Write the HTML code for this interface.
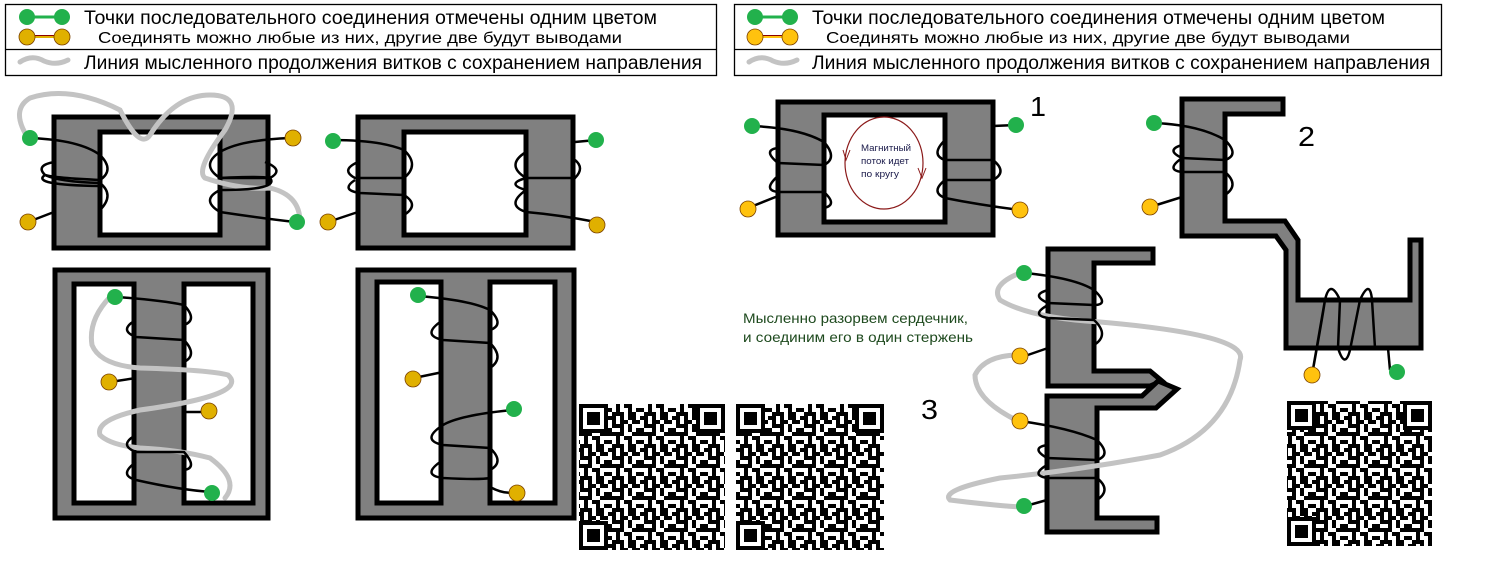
<!DOCTYPE html>
<html><head><meta charset="utf-8"><style>
html,body{margin:0;padding:0;background:#fff;}
svg{display:block;font-family:"Liberation Sans","DejaVu Sans",sans-serif;}
</style></head><body>
<svg width="1495" height="572" viewBox="0 0 1495 572" xmlns="http://www.w3.org/2000/svg">
<defs>
<pattern id="qr" width="32" height="32" patternUnits="userSpaceOnUse">
<rect width="32" height="32" fill="#fff"/>
<g fill="#000">
<rect x="0" y="0" width="8" height="4"/><rect x="12" y="0" width="4" height="8"/><rect x="20" y="0" width="8" height="4"/>
<rect x="4" y="4" width="4" height="8"/><rect x="16" y="4" width="4" height="4"/><rect x="24" y="4" width="8" height="4"/>
<rect x="8" y="8" width="8" height="4"/><rect x="20" y="8" width="4" height="8"/>
<rect x="0" y="12" width="4" height="8"/><rect x="12" y="12" width="4" height="4"/><rect x="28" y="12" width="4" height="8"/>
<rect x="4" y="16" width="12" height="4"/><rect x="24" y="16" width="4" height="4"/>
<rect x="8" y="20" width="4" height="8"/><rect x="16" y="20" width="8" height="4"/>
<rect x="0" y="24" width="4" height="4"/><rect x="20" y="24" width="4" height="8"/><rect x="28" y="24" width="4" height="4"/>
<rect x="4" y="28" width="12" height="4"/><rect x="24" y="28" width="4" height="4"/>
</g></pattern>
<g id="finder"><rect x="0" y="0" width="29" height="29" fill="#000"/><rect x="4" y="4" width="21" height="21" fill="#fff"/><rect x="8" y="8" width="13" height="13" fill="#000"/></g>
</defs>

<!-- Legends -->
<g stroke="#000" stroke-width="1.3" fill="none">
<rect x="5.5" y="4.5" width="711" height="71"/><line x1="5" y1="49.5" x2="716" y2="49.5"/>
<rect x="734.5" y="4.5" width="707" height="71"/><line x1="734" y1="49.5" x2="1441" y2="49.5"/>
</g>
<g>
<line x1="27" y1="17" x2="62" y2="17" stroke="#22b14c" stroke-width="3"/>
<circle cx="27" cy="17" r="8" fill="#22b14c"/><circle cx="62" cy="17" r="8" fill="#22b14c"/>
<line x1="27" y1="37" x2="62" y2="37" stroke="#e0b000" stroke-width="2"/>
<line x1="27" y1="35.5" x2="62" y2="35.5" stroke="#8b0000" stroke-width="1"/>
<circle cx="27" cy="37" r="8" fill="#e0b000" stroke="#7a4000" stroke-width="0.8"/><circle cx="62" cy="37" r="8" fill="#e0b000" stroke="#7a4000" stroke-width="0.8"/>
<path d="M20 62 Q32 54 44 61 Q56 66 68 60" stroke="#c3c3c3" stroke-width="5" fill="none" stroke-linecap="round"/>
<text x="84" y="24" font-size="19" textLength="573" lengthAdjust="spacingAndGlyphs">Точки последовательного соединения отмечены одним цветом</text>
<text x="98" y="43" font-size="16" textLength="524" lengthAdjust="spacingAndGlyphs">Соединять можно любые из них, другие две будут выводами</text>
<text x="84" y="69" font-size="19" textLength="618" lengthAdjust="spacingAndGlyphs">Линия мысленного продолжения витков с сохранением направления</text>

<line x1="755" y1="17" x2="790" y2="17" stroke="#22b14c" stroke-width="3"/>
<circle cx="755" cy="17" r="8" fill="#22b14c"/><circle cx="790" cy="17" r="8" fill="#22b14c"/>
<line x1="755" y1="37" x2="790" y2="37" stroke="#ffc20e" stroke-width="2"/>
<line x1="755" y1="35.5" x2="790" y2="35.5" stroke="#8b0000" stroke-width="1"/>
<circle cx="755" cy="37" r="8" fill="#ffc20e" stroke="#7a4000" stroke-width="0.8"/><circle cx="790" cy="37" r="8" fill="#ffc20e" stroke="#7a4000" stroke-width="0.8"/>
<path d="M749 62 Q761 54 773 61 Q785 66 797 60" stroke="#c3c3c3" stroke-width="5" fill="none" stroke-linecap="round"/>
<text x="812" y="24" font-size="19" textLength="573" lengthAdjust="spacingAndGlyphs">Точки последовательного соединения отмечены одним цветом</text>
<text x="826" y="43" font-size="16" textLength="524" lengthAdjust="spacingAndGlyphs">Соединять можно любые из них, другие две будут выводами</text>
<text x="812" y="69" font-size="19" textLength="618" lengthAdjust="spacingAndGlyphs">Линия мысленного продолжения витков с сохранением направления</text>
</g>

<g stroke="#000" stroke-width="5" fill="#808080">
<rect x="54" y="117" width="214" height="131"/>
<rect x="100" y="132" width="120" height="103" fill="#fff"/>
<rect x="358" y="117" width="215" height="131"/>
<rect x="404" y="132" width="122" height="103" fill="#fff"/>
<rect x="55" y="270" width="213" height="248"/>
<rect x="74" y="284" width="60" height="219" fill="#fff"/>
<rect x="184" y="284" width="69" height="219" fill="#fff"/>
<rect x="358" y="270" width="216" height="248"/>
<rect x="377" y="282" width="64" height="221" fill="#fff"/>
<rect x="490" y="282" width="65" height="221" fill="#fff"/>
<rect x="778" y="102" width="215" height="133"/>
<rect x="824" y="115" width="121" height="107" fill="#fff"/>
<path d="M1182 99 L1283 99 L1283 114 L1225 114 L1225 221 L1285 221 L1298 240 L1298 300 L1410 300 L1410 240 L1421 240 L1421 348 L1286 348 L1286 250 L1276 236 L1182 236 Z"/>
<path d="M1048 249 L1153 249 L1153 263 L1094 263 L1094 371 L1150 371 L1162 381 L1150 386 L1048 386 Z"/>
<path d="M1047 396 L1142 396 L1158 381 L1177 389 L1156 408 L1097 408 L1097 518 L1157 518 L1157 532 L1047 532 Z"/>
</g>

<g stroke="#c3c3c3" stroke-width="5" fill="none" stroke-linecap="round">
<path d="M28 138 Q10 110 30 98 Q70 85 120 110 Q140 150 150 135 Q175 95 210 95 Q245 95 225 130 Q195 170 205 178 Q240 190 270 188 Q300 195 300 222"/>
<path d="M110 297 Q88 320 92 345 Q100 365 140 368 Q210 370 228 375 Q250 395 140 410 Q95 420 100 435 Q110 445 140 448 Q180 450 210 458 Q240 480 225 498"/>
<path d="M1020 273 Q990 285 1000 300 Q1030 318 1100 322 Q1250 335 1240 360 Q1230 430 1160 455 Q1080 470 1000 478 Q940 490 950 500 Q990 505 1020 507"/>
<path d="M1020 355 Q985 355 975 375 Q975 400 1018 421"/>
</g>

<g stroke="#000" stroke-width="2.5" fill="none">
<path d="M30 138 Q80 140 100 155 Q115 170 100 180 Q55 178 45 175 Q35 165 55 162"/>
<path d="M45 175 Q60 182 100 183 Q115 195 100 210 M45 175 Q30 185 100 186"/>
<path d="M28 222 L54 212"/>
<path d="M290 138 Q240 140 220 152 Q200 165 220 178 Q260 176 270 178 Q285 170 265 162"/>
<path d="M220 190 Q200 200 220 212 Q260 218 295 222"/>
<path d="M220 178 L270 178 Q280 190 220 190"/>
<path d="M332 140 Q380 140 404 150 Q420 165 404 178 L355 178 Q340 170 358 162 M355 180 Q340 190 360 193 L404 195 Q420 205 404 215"/>
<path d="M328 222 L358 212"/>
<path d="M596 140 L575 142 M526 152 Q505 165 526 178 L575 178 Q585 168 575 160 M526 190 Q505 205 526 212 Q560 215 596 222 M526 178 Q505 184 526 190"/>
<path d="M116 297 Q160 300 184 305 Q198 320 184 325 M136 320 Q118 330 136 337 L184 340 Q198 355 184 362 M110 382 L136 378"/>
<path d="M208 412 L184 412 M136 435 Q118 445 136 452 L184 452 Q198 468 184 470 M136 462 Q118 475 136 480 Q180 490 212 492"/>
<path d="M418 296 Q470 300 490 310 Q505 325 490 330 M443 320 Q420 335 443 340 L490 343 Q505 358 490 368 M414 378 L443 372"/>
<path d="M513 410 Q460 415 443 425 Q420 440 443 445 L490 448 Q505 462 490 470 M443 460 Q420 475 443 478 Q480 480 490 478 M490 487 Q505 495 516 492"/>
<path d="M752 126 Q800 128 824 142 Q838 158 824 165 L778 163 Q762 150 778 148 M778 176 Q762 190 778 192 L824 192 Q838 205 824 208 M748 208 L778 196 M778 163 L778 176"/>
<path d="M1016 125 L993 126 M945 140 Q930 155 945 160 L993 160 Q1008 172 993 180 L945 180 Q930 192 945 198 Q980 205 1020 210"/>
<path d="M1154 123 Q1200 125 1225 140 Q1240 155 1225 160 L1182 158 Q1165 150 1182 145 M1182 158 Q1165 170 1182 172 L1225 172 Q1240 185 1225 195 M1150 207 L1182 197"/>
<path d="M1312 375 Q1322 320 1325 300 Q1330 278 1340 300 L1338 348 Q1345 370 1350 350 L1360 300 Q1370 278 1372 300 L1375 348 M1312 375 L1325 300 M1390 370 L1388 348"/>
<path d="M1025 273 Q1075 278 1094 290 Q1110 305 1094 305 L1048 303 Q1030 295 1048 290 M1048 305 Q1030 315 1048 318 L1094 320 Q1110 335 1094 345 M1022 357 L1048 348"/>
<path d="M1020 421 Q1070 428 1097 440 Q1112 455 1097 460 L1047 458 Q1030 448 1047 445 M1047 465 Q1030 475 1047 478 L1097 478 Q1112 490 1097 500 M1022 507 L1047 500"/>
</g>

<ellipse cx="884" cy="163" rx="39" ry="46" fill="none" stroke="#8b1a1a" stroke-width="1.2"/>
<path d="M850 150 L846 160 L843 150 M918 168 L922 178 L926 168" stroke="#8b1a1a" stroke-width="1" fill="none"/>
<text x="861" y="151" font-size="9.5" fill="#1a1a4a" textLength="50" lengthAdjust="spacingAndGlyphs">Магнитный</text>
<text x="861" y="164" font-size="9.5" fill="#1a1a4a" textLength="48" lengthAdjust="spacingAndGlyphs">поток идет</text>
<text x="861" y="177" font-size="9.5" fill="#1a1a4a" textLength="38" lengthAdjust="spacingAndGlyphs">по кругу</text>

<g fill="#22b14c">
<circle cx="30" cy="138" r="8"/><circle cx="297" cy="222" r="8"/><circle cx="333" cy="141" r="8"/><circle cx="596" cy="140" r="8"/>
<circle cx="115" cy="297" r="8"/><circle cx="212" cy="493" r="8"/><circle cx="418" cy="295" r="8"/><circle cx="514" cy="409" r="8"/>
<circle cx="752" cy="126" r="8"/><circle cx="1016" cy="125" r="8"/><circle cx="1154" cy="123" r="8"/><circle cx="1397" cy="372" r="8"/>
<circle cx="1024" cy="273" r="8"/><circle cx="1024" cy="506" r="8"/>
</g>
<g fill="#e0b000" stroke="#7a4000" stroke-width="0.8">
<circle cx="28" cy="222" r="8"/><circle cx="293" cy="138" r="8"/><circle cx="328" cy="222" r="8"/><circle cx="597" cy="225" r="8"/>
<circle cx="109" cy="382" r="8"/><circle cx="209" cy="411" r="8"/><circle cx="413" cy="379" r="8"/><circle cx="517" cy="493" r="8"/>
</g>
<g fill="#ffc20e" stroke="#7a4000" stroke-width="0.8">
<circle cx="748" cy="209" r="8"/><circle cx="1020" cy="210" r="8"/><circle cx="1150" cy="207" r="8"/><circle cx="1312" cy="375" r="8"/>
<circle cx="1020" cy="356" r="8"/><circle cx="1020" cy="421" r="8"/>
</g>

<text x="1030" y="116" font-size="28" textLength="16" lengthAdjust="spacingAndGlyphs">1</text>
<text x="1298" y="146" font-size="28" textLength="17" lengthAdjust="spacingAndGlyphs">2</text>
<text x="921" y="419" font-size="28" textLength="17" lengthAdjust="spacingAndGlyphs">3</text>
<text x="743" y="323" font-size="14" fill="#1e4a1e" textLength="225" lengthAdjust="spacingAndGlyphs">Мысленно разорвем сердечник,</text>
<text x="743" y="342" font-size="14" fill="#1e4a1e" textLength="230" lengthAdjust="spacingAndGlyphs">и соединим его в один стержень</text>

<g>
<rect x="579" y="404" width="146" height="146" fill="url(#qr)"/>
<use href="#finder" x="579" y="404"/><use href="#finder" x="696" y="404"/><use href="#finder" x="579" y="521"/>
<rect x="736" y="404" width="148" height="146" fill="url(#qr)"/>
<use href="#finder" x="736" y="404"/><use href="#finder" x="855" y="404"/><use href="#finder" x="736" y="521"/>
<rect x="1287" y="401" width="145" height="145" fill="url(#qr)"/>
<use href="#finder" x="1287" y="401"/><use href="#finder" x="1403" y="401"/><use href="#finder" x="1287" y="517"/>
</g>
</svg>
</body></html>
